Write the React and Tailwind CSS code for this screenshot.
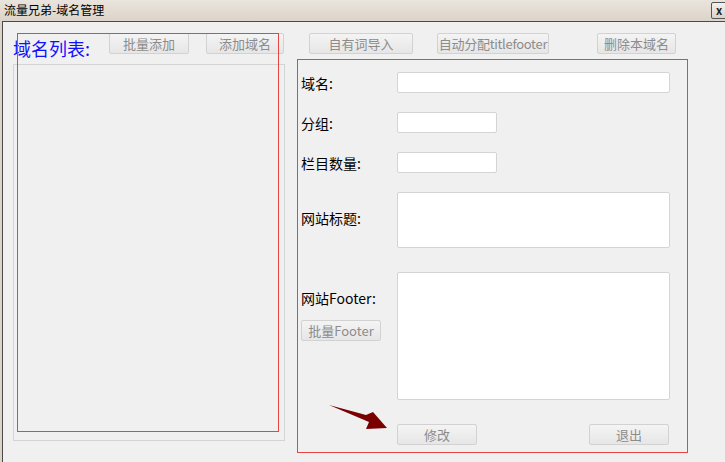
import React from 'react'

const font = { fontFamily: '"Noto Sans CJK SC", "Noto Sans", sans-serif' }

function Btn({ children, className = '' }) {
  return (
    <div
      className={`h-[21px] flex items-center justify-center whitespace-nowrap rounded-[2px] border border-[#d2d2d2] bg-gradient-to-b from-[#f4f4f4] to-[#e6e6e6] text-[13px] leading-none text-[#8c8c8c] ${className}`}
    >
      {children}
    </div>
  )
}

function Field({ className = '' }) {
  return <div className={`bg-white border border-[#d4d4d4] rounded-[2px] ${className}`} />
}

export default function App() {
  return (
    <div className="relative w-[725px] h-[462px] overflow-hidden bg-[#dcd4c9] flex flex-col" style={font}>
      {/* title bar */}
      <div className="h-[21px] flex items-start bg-gradient-to-b from-[#e9e4dd] to-[#dcd4c9]">
        <span className="ml-[4px] mt-[3px] text-[12px] leading-[14px] text-black">流量兄弟-域名管理</span>
        <div className="ml-auto -mr-[2px] mt-[2px] w-[16px] h-[17px] rounded-[2px] border border-[#555] bg-gradient-to-b from-[#f4f2ee] to-[#d8d2ca] flex items-center justify-center text-[11px] font-bold leading-none text-[#222]">
          x
        </div>
      </div>

      {/* window body */}
      <div className="relative flex-1 ml-[2px] border-l border-t border-[#4a4a4a] bg-[#f0f0f0] flex flex-col">
        {/* top row */}
        <div className="h-[37px] pt-[11px] pl-[10px] flex items-start">
          <span className="w-[96px] mt-[5px] text-[18px] leading-[20px] text-[#1010ff]">域名列表:</span>
          <Btn className="w-[80px]">批量添加</Btn>
          <Btn className="w-[78px] ml-[17px]">添加域名</Btn>
          <Btn className="w-[104px] ml-[25px]">自有词导入</Btn>
          <Btn className="w-[112px] ml-[24px] tracking-[-0.3px]">自动分配titlefooter</Btn>
          <Btn className="w-[79px] ml-[48px]">删除本域名</Btn>
        </div>

        {/* columns */}
        <div className="flex items-start pl-[10px]">
          <div className="mt-[5px] w-[272px] h-[377px] border border-[#d4d4d4]" />

          <div className="ml-[12px] w-[391px] h-[394px] border border-[#e84444] flex flex-col pl-[3px] pt-[12px]">
            <div className="flex items-center">
              <span className="w-[96px] text-[14px] leading-[20px] text-black">域名:</span>
              <Field className="w-[273px] h-[21px]" />
            </div>
            <div className="flex items-center mt-[19px]">
              <span className="w-[96px] text-[14px] leading-[20px] text-black">分组:</span>
              <Field className="w-[100px] h-[21px]" />
            </div>
            <div className="flex items-center mt-[19px]">
              <span className="w-[96px] text-[14px] leading-[20px] text-black">栏目数量:</span>
              <Field className="w-[100px] h-[21px]" />
            </div>
            <div className="flex items-center mt-[19px]">
              <span className="w-[96px] -mt-[4px] text-[14px] leading-[20px] text-black">网站标题:</span>
              <Field className="w-[273px] h-[56px]" />
            </div>
            <div className="flex items-start mt-[24px]">
              <div className="w-[96px] flex flex-col items-start">
                <span className="mt-[16px] text-[14px] leading-[20px] text-black">网站Footer:</span>
                <Btn className="w-[80px] mt-[12px]">批量Footer</Btn>
              </div>
              <Field className="w-[273px] h-[128px]" />
            </div>
            <div className="flex items-center mt-[24px] pl-[96px]">
              <Btn className="w-[80px]">修改</Btn>
              <Btn className="w-[80px] ml-[112px]">退出</Btn>
            </div>
          </div>
        </div>

        {/* red overlay outline on list */}
        <div className="absolute left-[14px] top-[11px] w-[262px] h-[399px] border border-[#e84444] pointer-events-none" />
      </div>

      {/* arrow */}
      <svg className="absolute left-[325px] top-[400px] pointer-events-none" width="70" height="35" viewBox="0 0 70 35">
        <polygon points="4,5 41,15 48,12 62,28 41,29 44,22" fill="#7a0000" />
      </svg>
    </div>
  )
}
